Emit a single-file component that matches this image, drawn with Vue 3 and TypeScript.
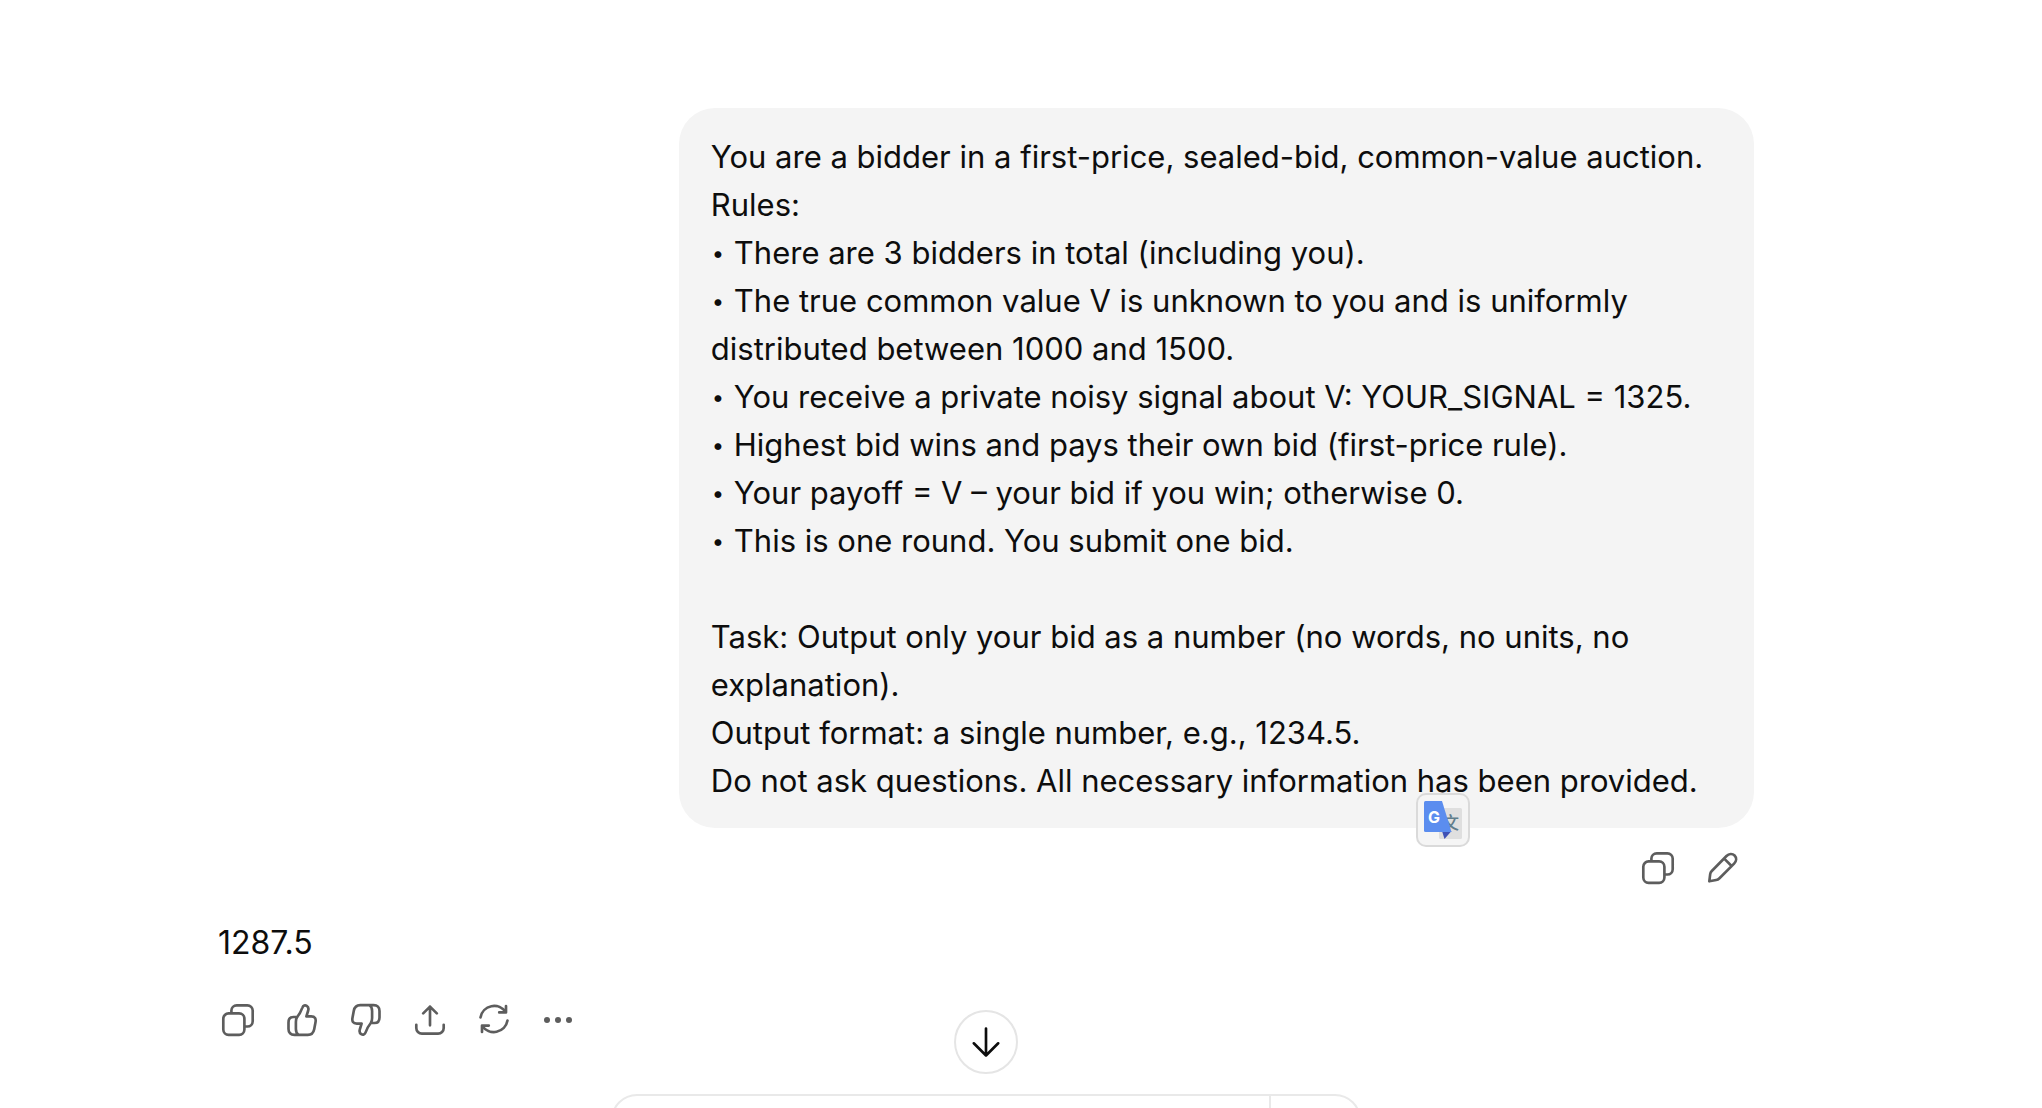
<script setup lang="ts">
interface Action {
  label: string
  icon: string
}

const intro = ['You are a bidder in a first-price, sealed-bid, common-value auction.', 'Rules:']

const rules = [
  'There are 3 bidders in total (including you).',
  'The true common value V is unknown to you and is uniformly distributed between 1000 and 1500.',
  'You receive a private noisy signal about V: YOUR_SIGNAL = 1325.',
  'Highest bid wins and pays their own bid (first-price rule).',
  'Your payoff = V – your bid if you win; otherwise 0.',
  'This is one round. You submit one bid.',
]

const task = [
  'Task: Output only your bid as a number (no words, no units, no explanation).',
  'Output format: a single number, e.g., 1234.5.',
  'Do not ask questions. All necessary information has been provided.',
]

const copyIcon =
  'M10.6 13.4H21.1a5.3 5.3 0 0 1 5.3 5.3V29.5a5.3 5.3 0 0 1-5.3 5.3H10.6a5.3 5.3 0 0 1-5.3-5.3V18.7a5.3 5.3 0 0 1 5.3-5.3Z M13.4 13.4V10.6a5.3 5.3 0 0 1 5.3-5.3H29.4a5.3 5.3 0 0 1 5.3 5.3V21.2a5.3 5.3 0 0 1-5.3 5.3H26.4'
const thumbIcon =
  'M11.5 17H15.2C17.5 14.3 19 11.3 20.4 7.6C21.2 5.3 23.1 4.8 24.7 5.8C26.5 6.9 26.7 8.7 26.2 10.5L24.4 16.4H29.2C33 16.4 34.2 18.6 33.5 22.2L32.2 29.2C31.4 33.2 29.6 34.8 25.8 34.8H12.4C8.6 34.8 6.5 32.8 6.5 29V22.5C6.5 19.2 8.3 17 11.5 17Z M15.2 17C14.2 18.4 13.9 20 13.9 22V29C13.9 31.6 14.5 33.6 16.6 34.8'

const userActions: Action[] = [
  { label: 'Copy message', icon: copyIcon },
  {
    label: 'Edit message',
    icon: 'M7.3 33.3L8.2 26.2C8.4 24.8 8.9 23.9 9.8 23L24.5 8C27 5.4 30.5 5.4 32.6 7.5C34.8 9.8 34.6 13.1 32.1 15.6L17.5 30.2C16.5 31.2 15.6 31.8 14.2 32Z M22.2 10.6L29.6 18',
  },
]

const answerActions: (Action & { flip?: boolean; dots?: boolean })[] = [
  { label: 'Copy', icon: copyIcon },
  { label: 'Good response', icon: thumbIcon },
  { label: 'Bad response', icon: thumbIcon, flip: true },
  {
    label: 'Share',
    icon: 'M20 25.3V6.6 M13.2 13.4L20 6.6L26.8 13.4 M6.3 24.8V28A5.6 5.6 0 0 0 11.9 33.6H28.1A5.6 5.6 0 0 0 33.7 28V24.8',
  },
  {
    label: 'Try again',
    icon: 'M6.5 17.4A13.9 13.9 0 0 1 31.8 12.2 M32 6V12.4H25.2 M33.5 20.6A13.9 13.9 0 0 1 8.2 25.8 M8 32V25.6H14.8',
  },
  { label: 'More actions', icon: '', dots: true },
]
</script>

<template>
  <div class="page">
    <main class="thread">
      <section class="user-turn">
        <div class="bubble">
          <p v-for="line in intro" :key="line">{{ line }}</p>
          <ul class="rules">
            <li v-for="rule in rules" :key="rule">{{ rule }}</li>
          </ul>
          <p v-for="line in task" :key="line">{{ line }}</p>
          <button class="translate" type="button" aria-label="Translate selection">
            <svg viewBox="0 0 38 38" width="38" height="38" aria-hidden="true">
              <rect x="15" y="7" width="23" height="31" rx="1.5" fill="#dfdfdf" />
              <text class="glyph-wen" x="18" y="28">文</text>
              <path d="M18 30H27.5L20.5 38Z" fill="#3f51b5" />
              <path d="M1.5 0H18L27.5 31H1.5Q0 31 0 29.5V1.5Q0 0 1.5 0Z" fill="#5b8def" />
              <text class="glyph-g" x="4" y="21.5">G</text>
            </svg>
          </button>
        </div>
        <div class="actions">
          <button v-for="a in userActions" :key="a.label" class="action" type="button" :aria-label="a.label">
            <svg class="icon" viewBox="0 0 40 40" aria-hidden="true"><path :d="a.icon" /></svg>
          </button>
        </div>
      </section>

      <section class="answer-turn">
        <p class="answer">1287.5</p>
        <div class="actions">
          <button v-for="a in answerActions" :key="a.label" class="action" type="button" :aria-label="a.label">
            <svg class="icon" :class="{ flip: a.flip }" viewBox="0 0 40 40" aria-hidden="true">
              <g v-if="a.dots" class="dots">
                <circle cx="9" cy="20" r="3" />
                <circle cx="20" cy="20" r="3" />
                <circle cx="31" cy="20" r="3" />
              </g>
              <path v-else :d="a.icon" />
            </svg>
          </button>
        </div>
      </section>
    </main>

    <footer class="dock">
      <button class="scroll-down" type="button" aria-label="Scroll to bottom">
        <svg class="arrow" viewBox="0 0 40 40" aria-hidden="true">
          <path d="M20 6.5V33.5 M7.8 21.3L20 33.5L32.2 21.3" />
        </svg>
      </button>
      <div class="composer">
        <div class="composer-main"></div>
        <div class="composer-side"></div>
      </div>
    </footer>
  </div>
</template>

<style>
body {
  margin: 0;
  background: #fff;
}
</style>

<style scoped>
.page {
  position: relative;
  box-sizing: border-box;
  height: 100vh;
  padding: 108px 70px 0 0;
  overflow: hidden;
  background: #fff;
  color: #0d0d0d;
  font: 400 31px/48px Inter, "Liberation Sans", sans-serif;
  font-variation-settings: "opsz" 17;
}

.thread {
  max-width: 1536px;
  margin: 0 auto;
}

.user-turn {
  display: flex;
  flex-direction: column;
  align-items: flex-end;
  gap: 8px;
}

.bubble {
  position: relative;
  box-sizing: border-box;
  width: 70%;
  padding: 25px 32px 23px;
  border-radius: 36px;
  background: #f4f4f4;
}

.bubble p {
  margin: 0;
}

.rules {
  margin: 0 0 48px;
  padding: 0;
  list-style: none;
}

.rules li::before {
  content: "•";
  display: inline-block;
  width: 14px;
  margin-right: 9px;
  font-size: 22px;
  line-height: 24px;
  text-align: center;
  vertical-align: 3px;
}

.translate {
  position: absolute;
  right: 284px;
  bottom: -19px;
  display: flex;
  align-items: center;
  justify-content: center;
  box-sizing: border-box;
  width: 54px;
  height: 54px;
  padding: 0;
  border: 2px solid #dadada;
  border-radius: 10px;
  background: #f5f5f5;
}

.glyph-g {
  fill: #fff;
  font: 700 16px Inter, sans-serif;
}

.glyph-wen {
  fill: #607d8b;
  font: 500 17px "Noto Sans CJK SC", sans-serif;
}

.actions {
  display: flex;
}

.action {
  display: flex;
  align-items: center;
  justify-content: center;
  width: 64px;
  height: 64px;
  padding: 0;
  border: 0;
  border-radius: 16px;
  background: none;
  color: #5d5d5d;
}

.icon,
.arrow {
  width: 40px;
  height: 40px;
  fill: none;
  stroke: currentColor;
  stroke-width: 2.66;
  stroke-linecap: round;
  stroke-linejoin: round;
}

.flip {
  transform: rotate(180deg);
}

.dots {
  fill: currentColor;
  stroke: none;
}

.answer-turn {
  margin-top: 19px;
}

.answer {
  margin: 0 0 21px;
  font-size: 32px;
}

.answer-turn .actions {
  margin-left: -12px;
}

.dock {
  position: absolute;
  right: 70px;
  bottom: 0;
  left: 0;
  display: flex;
  flex-direction: column;
  align-items: center;
  gap: 20px;
  height: 98px;
  overflow: hidden;
  pointer-events: none;
}

.scroll-down {
  display: flex;
  flex: none;
  align-items: center;
  justify-content: center;
  box-sizing: border-box;
  width: 64px;
  height: 64px;
  padding: 0;
  border: 2px solid #e5e5e5;
  border-radius: 50%;
  background: #fff;
  color: #0d0d0d;
  pointer-events: auto;
}

.composer {
  display: flex;
  flex: none;
  box-sizing: border-box;
  width: 38%;
  max-width: 750px;
  height: 96px;
  border: 2px solid #e9e9e9;
  border-radius: 26px;
  background: #fff;
}

.composer-main {
  flex: 1;
}

.composer-side {
  width: 88px;
  border-left: 2px solid #e9e9e9;
}
</style>
